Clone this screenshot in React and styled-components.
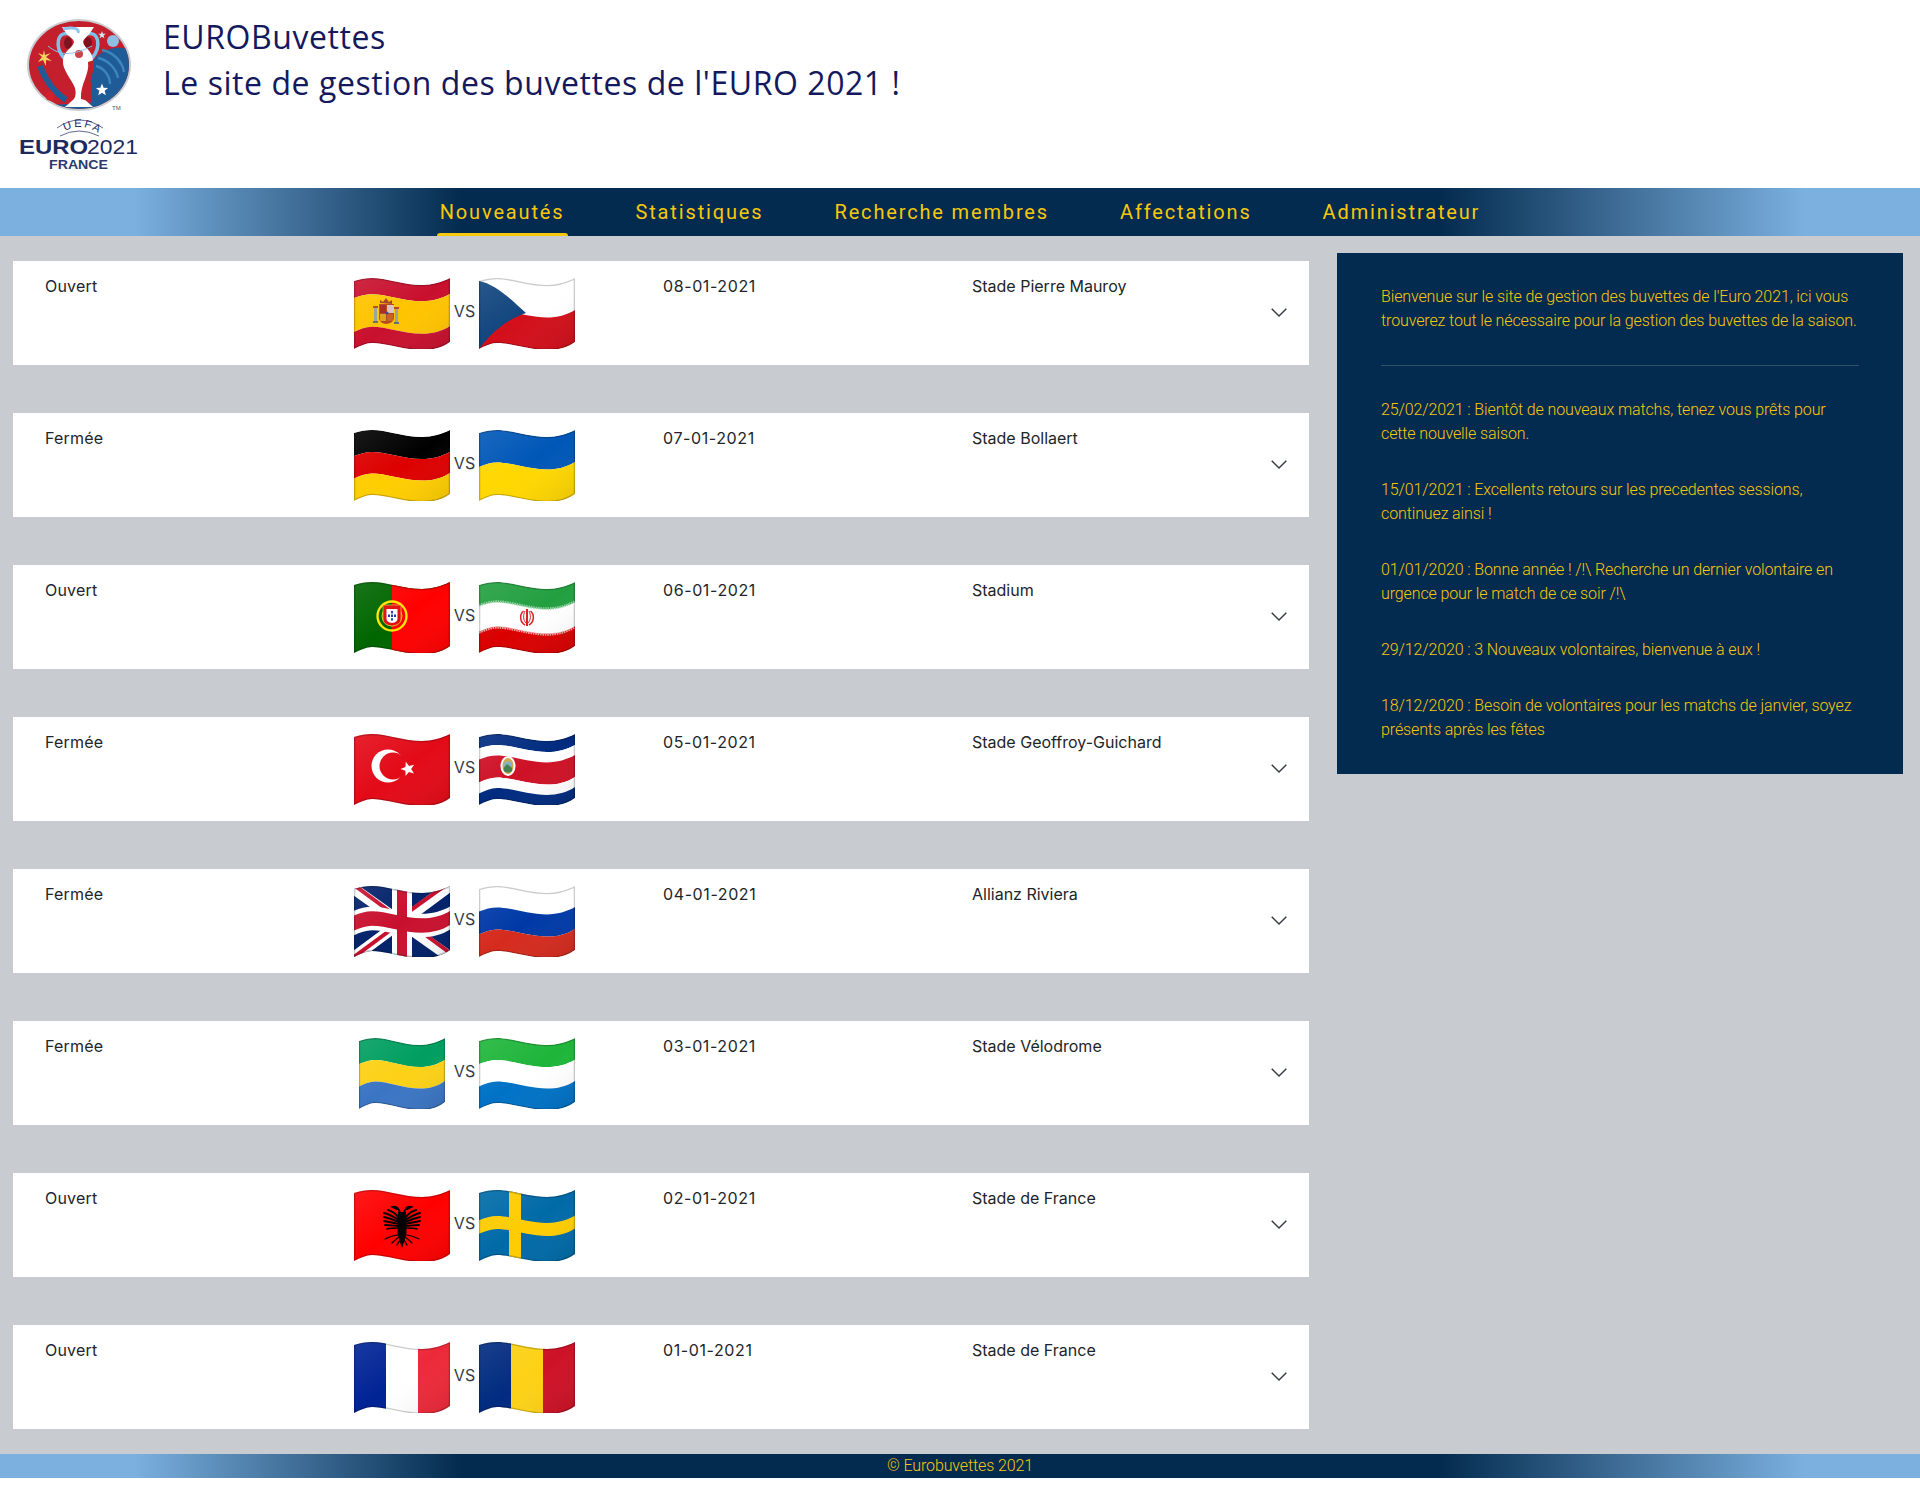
import React, { useId } from 'react';
import styled, { createGlobalStyle } from 'styled-components';

const navy = '#032b4f';
const sky = '#7bb0df';
const gold = '#f7c80c';
const bar = `linear-gradient(to right, ${sky} 7%, ${navy} 24%, ${navy} 75%, ${sky} 94%)`;

const GlobalStyle = createGlobalStyle`
  * { box-sizing: border-box; }
  body { margin: 0; background: #fff; font-family: 'Inter', sans-serif; color: #212529; }
  p { margin: 0; }
`;

const Header = styled.header`
  height: 188px;
  display: flex;
  background: #fff;
`;

const LogoArt = styled.svg`
  width: 163px;
  height: 188px;
  flex: none;
`;

const Titles = styled.div`
  padding-top: 14px;
`;

const Title = styled.h1`
  margin: 0;
  font-family: 'Open Sans', sans-serif;
  font-size: 32px;
  line-height: 46px;
  font-weight: 400;
  letter-spacing: 0.56px;
  color: #14195e;
`;

const Nav = styled.nav`
  height: 48px;
  display: flex;
  justify-content: center;
  align-items: center;
  gap: 71px;
  background: ${bar};
`;

const NavLink = styled.a`
  position: relative;
  font-family: 'Roboto', sans-serif;
  font-size: 20px;
  letter-spacing: 1.85px;
  color: ${gold};

  &::after {
    content: '';
    display: ${(p) => (p.$active ? 'block' : 'none')};
    position: absolute;
    left: -3px;
    right: -3px;
    top: 33px;
    height: 3px;
    border-radius: 3px 3px 0 0;
    background: ${gold};
  }
`;

const Main = styled.main`
  display: flex;
  align-items: flex-start;
  gap: 28px;
  padding: 17px 17px 25px 13px;
  background: #c8cbd0;
`;

const Matches = styled.div`
  width: 1296px;
  flex: none;
  display: flex;
  flex-direction: column;
  gap: 48px;
  padding-top: 8px;
`;

const MatchRow = styled.div`
  height: 104px;
  display: grid;
  grid-template-columns: 309px 309px 309px 1fr 16px;
  padding: 13px 22px 0 32px;
  background: #fff;
  font-size: 16px;
  line-height: 24px;
`;

const Cell = styled.div`
  letter-spacing: ${(p) => p.$spacing || 0}px;
`;

const Teams = styled.div`
  display: flex;
  align-items: center;
  height: 72px;
  margin-top: 3px;
`;

const Versus = styled.span`
  width: 29px;
  text-align: center;
  color: #343a40;
  font-size: 16px;
  position: relative;
  top: -2px;
`;

const FlagSlot = styled.div`
  width: 96px;
  height: 72px;
  display: flex;
  justify-content: center;
`;

const FlagArt = styled.svg`
  width: ${(p) => (p.$narrow ? 86 : 96)}px;
  height: 72px;
  display: block;
`;

const Chevron = styled.svg`
  width: 16px;
  height: 9px;
  align-self: center;
  margin-top: -15px;
`;

const Panel = styled.aside`
  flex: 1;
  padding: 32px 44px 0;
  background: ${navy};
  color: ${gold};
  font-family: 'Roboto', sans-serif;
  font-weight: 300;
  font-size: 16px;
  letter-spacing: -0.12px;
  line-height: 24px;
`;

const Divider = styled.hr`
  margin: 32px 0;
  border: 0;
  height: 1px;
  background: #2f5162;
`;

const News = styled.p`
  margin-bottom: 32px;
`;

const Footer = styled.footer`
  height: 24px;
  text-align: center;
  font-family: 'Roboto', sans-serif;
  font-weight: 300;
  font-size: 16px;
  letter-spacing: -0.12px;
  line-height: 24px;
  color: ${gold};
  background: ${bar};
`;

// wave outline of the emoji flags, t = 0 top edge, t = 1 bottom edge
const TOP = [4, 2, 1, 1, 1, 8, 8, 8, 5, 1];
const BOTTOM = [72, 69, 66, 66, 66, 73, 73, 73, 71, 65];
const at = (i, t) => (TOP[i] + (BOTTOM[i] - TOP[i]) * t).toFixed(2);

const forward = (t) =>
  `M0 ${at(0, t)} C6 ${at(1, t)} 12 ${at(2, t)} 18 ${at(3, t)} C32 ${at(4, t)} 50 ${at(5, t)} 68 ${at(6, t)} C78 ${at(7, t)} 88 ${at(8, t)} 96 ${at(9, t)}`;
const backward = (t) =>
  `L96 ${at(9, t)} C88 ${at(8, t)} 78 ${at(7, t)} 68 ${at(6, t)} C50 ${at(5, t)} 32 ${at(4, t)} 18 ${at(3, t)} C12 ${at(2, t)} 6 ${at(1, t)} 0 ${at(0, t)} Z`;
const band = (a, b) => `${forward(a)} ${backward(b)}`;

const Bands = ({ items }) =>
  items.map(([a, b, c]) => <path key={`${a}-${c}`} d={band(a, b)} fill={c} />);

const Columns = ({ colors }) =>
  colors.map((c, i) => (
    <rect key={c} x={(i * 96) / colors.length} y="0" width={96 / colors.length} height="74" fill={c} />
  ));

const Star = ({ cx, cy, r, fill = '#fff', rotate = 0 }) => {
  const pts = [];
  for (let i = 0; i < 10; i++) {
    const rad = i % 2 ? r * 0.42 : r;
    const a = -Math.PI / 2 + (i * Math.PI) / 5 + rotate;
    pts.push(`${(cx + rad * Math.cos(a)).toFixed(2)},${(cy + rad * Math.sin(a)).toFixed(2)}`);
  }
  return <polygon points={pts.join(' ')} fill={fill} />;
};

// one half of the Albanian eagle, feathers drawn apart so that they read at this size
const EagleHalf = () => (
  <g stroke="#000" strokeLinecap="round" fill="none">
    <path d="M-3 -8 C-6 -12 -10 -15 -14 -16" strokeWidth="2.2" />
    <path d="M-3 -6 C-8 -9 -13 -12 -18 -13" strokeWidth="2" />
    <path d="M-3 -4 C-8 -6 -13 -8 -18 -9" strokeWidth="2" />
    <path d="M-3 -2 C-8 -3 -13 -4 -18 -5" strokeWidth="2" />
    <path d="M-3 0 C-8 0 -13 -1 -17 -1" strokeWidth="1.8" />
    <path d="M-3 2 C-8 2 -12 2 -15 3" strokeWidth="1.6" />
    <path d="M-3 9 C-8 9 -13 11 -17 13" strokeWidth="1.2" />
    <path d="M-3 11 C-6 13 -9 16 -10 17" strokeWidth="1.2" />
    <path d="M-2 -13 C-3 -17 -5 -20 -9 -19 L-5 -17" strokeWidth="2" />
    <path d="M-2 14 L-5 19" strokeWidth="1.4" />
  </g>
);

const FLAGS = {
  es: () => (
    <>
      <Bands items={[[0, 0.25, '#c8102e'], [0.25, 0.75, '#ffc400'], [0.75, 1, '#c8102e']]} />
      <g>
        <rect x="20" y="30" width="3" height="15" fill="#9aa39a" />
        <rect x="41" y="31" width="3" height="15" fill="#9aa39a" />
        <rect x="19" y="29" width="5" height="2" fill="#b5481f" />
        <rect x="40" y="30" width="5" height="2" fill="#b5481f" />
        <rect x="19" y="44" width="5" height="2" fill="#6d6d6d" />
        <rect x="40" y="45" width="5" height="2" fill="#6d6d6d" />
        <path d="M26 26 L26 23 L29 25 L32 21 L35 25 L38 23 L38 27 Z" fill="#a8412a" />
        <path d="M25 27 H40 V41 Q40 46 32 47 Q25 46 25 41 Z" fill="#b5481f" />
        <rect x="33" y="28" width="7" height="8" fill="#d9c5c0" />
        <rect x="26" y="28" width="6" height="8" fill="#a82a20" />
        <rect x="26" y="37" width="6" height="7" fill="#e0a020" />
        <rect x="33" y="37" width="6" height="7" fill="#c8602a" />
        <circle cx="33" cy="36" r="1.6" fill="#3a4a8c" />
      </g>
    </>
  ),
  cz: () => (
    <>
      <Bands items={[[0, 0.5, '#fff'], [0.5, 1, '#d20f1a']]} />
      <path d="M0 4 C16 7 32 22 47 36 C28 42 12 56 0 72 Z" fill="#11457e" />
    </>
  ),
  de: () => <Bands items={[[0, 0.34, '#000'], [0.34, 0.67, '#dd0000'], [0.67, 1, '#ffce00']]} />,
  ua: () => <Bands items={[[0, 0.5, '#0057b7'], [0.5, 1, '#ffd700']]} />,
  pt: () => (
    <>
      <Columns colors={['#006600']} />
      <rect x="38" y="0" width="58" height="74" fill="#ff0000" />
      <circle cx="38" cy="35" r="14.5" fill="none" stroke="#ffe600" strokeWidth="2.4" />
      <circle cx="38" cy="35" r="10" fill="none" stroke="#d9c200" strokeWidth="1" />
      <path d="M29 24 H47 V38 Q47 44 38 45 Q29 44 29 38 Z" fill="#e01010" stroke="#f4e04a" strokeWidth="0.6" />
      <path d="M32.5 28 H43.5 V38 Q43.5 41 38 42 Q32.5 41 32.5 38 Z" fill="#fff" />
      <path d="M37 30 h2 v2.4 h-2 Z M34 33.6 h2 v2.4 h-2 Z M37 33.6 h2 v2.4 h-2 Z M40 33.6 h2 v2.4 h-2 Z M37 37.2 h2 v2.4 h-2 Z" fill="#1f3fa8" />
    </>
  ),
  ir: () => (
    <>
      <Bands items={[[0, 0.31, '#239f40'], [0.31, 0.69, '#fff'], [0.69, 1, '#da0000']]} />
      <path d={forward(0.3)} fill="none" stroke="#8fcf9f" strokeWidth="2.4" strokeDasharray="1.6 0.8" />
      <path d={forward(0.7)} fill="none" stroke="#eca0a0" strokeWidth="2.4" strokeDasharray="1.6 0.8" />
      <g fill="none" stroke="#da2020" strokeWidth="1.5">
        <path d="M48 28 V45" strokeWidth="2" />
        <path d="M44.5 30 C40 34 41 41 46 44" />
        <path d="M51.5 30 C56 34 55 41 50 44" />
        <path d="M46 30 C44 34 44 39 47 42" strokeWidth="1" />
        <path d="M50 30 C52 34 52 39 49 42" strokeWidth="1" />
      </g>
    </>
  ),
  tr: () => (
    <>
      <Columns colors={['#e30a17']} />
      <circle cx="34" cy="33" r="16.5" fill="#fff" />
      <circle cx="39" cy="33" r="13.5" fill="#e30a17" />
      <Star cx={54} cy={36} r={7.5} rotate={-0.3} />
    </>
  ),
  cr: () => (
    <>
      <Bands
        items={[
          [0, 0.17, '#002b7f'],
          [0.17, 0.33, '#fff'],
          [0.33, 0.67, '#ce1126'],
          [0.67, 0.83, '#fff'],
          [0.83, 1, '#002b7f'],
        ]}
      />
      <ellipse cx="29" cy="33" rx="7.5" ry="10" fill="#fff" />
      <ellipse cx="29" cy="33" rx="5.5" ry="8" fill="#c9a94e" />
      <ellipse cx="29" cy="32" rx="4" ry="3.5" fill="#7fb0c8" />
      <path d="M24.5 35 L28 31 L33 35 L33 38 Q29 41 25 38 Z" fill="#3f7f4a" />
    </>
  ),
  gb: () => (
    <>
      <Columns colors={['#012169']} />
      <path d="M0 4 L96 72 M96 1 L0 72" stroke="#fff" strokeWidth="11" />
      <path d="M0 0 L46 34 M50 34 L96 68 M96 -3 L50 30 M46 38 L0 72" stroke="#c8102e" strokeWidth="4" />
      <rect x="38" y="0" width="20" height="74" fill="#fff" />
      <Bands items={[[0.32, 0.68, '#fff']]} />
      <rect x="43" y="0" width="10" height="74" fill="#c8102e" />
      <Bands items={[[0.39, 0.61, '#c8102e']]} />
    </>
  ),
  ru: () => <Bands items={[[0, 0.33, '#fff'], [0.33, 0.67, '#0039a6'], [0.67, 1, '#d52b1e']]} />,
  ga: () => <Bands items={[[0, 0.34, '#009e60'], [0.34, 0.67, '#fcd116'], [0.67, 1, '#3a75c4']]} />,
  sl: () => <Bands items={[[0, 0.34, '#1eb53a'], [0.34, 0.67, '#fff'], [0.67, 1, '#0072c6']]} />,
  al: () => (
    <>
      <Columns colors={['#ff0000']} />
      <g transform="translate(48 37)">
        <EagleHalf />
        <g transform="scale(-1 1)">
          <EagleHalf />
        </g>
        <path d="M-4 -14 L4 -14 L4.5 8 L2 16 L0 22 L-2 16 L-4.5 8 Z" fill="#000" />
      </g>
    </>
  ),
  se: () => (
    <>
      <Columns colors={['#006aa7']} />
      <Bands items={[[0.4, 0.6, '#fecc00']]} />
      <rect x="30" y="0" width="12" height="74" fill="#fecc00" />
    </>
  ),
  fr: () => <Columns colors={['#002395', '#ffffff', '#ed2939']} />,
  ro: () => <Columns colors={['#002b7f', '#fcd116', '#ce1126']} />,
};

const Flag = ({ code, narrow }) => {
  const id = useId().replace(/[^a-zA-Z0-9]/g, '');
  const Art = FLAGS[code];
  const outline = band(0, 1);
  return (
    <FlagSlot>
      <FlagArt $narrow={narrow} viewBox="0 0 96 72" preserveAspectRatio="none">
        <defs>
          <clipPath id={`clip${id}`}>
            <path d={outline} />
          </clipPath>
          <linearGradient id={`shade${id}`} x1="0" y1="0" x2="1" y2="1">
            <stop offset="0" stopColor="#fff" stopOpacity="0.1" />
            <stop offset="0.5" stopColor="#fff" stopOpacity="0" />
            <stop offset="1" stopColor="#000" stopOpacity="0.1" />
          </linearGradient>
        </defs>
        <g clipPath={`url(#clip${id})`}>
          <Art />
          <path d={outline} fill={`url(#shade${id})`} />
          <path d={outline} fill="none" stroke="#000" strokeOpacity="0.2" strokeWidth="2.6" />
        </g>
      </FlagArt>
    </FlagSlot>
  );
};

const Logo = () => (
  <LogoArt viewBox="0 0 163 188">
    <defs>
      <clipPath id="logoOval">
        <ellipse cx="79" cy="65" rx="50" ry="44" />
      </clipPath>
      <path id="uefaArc" d="M59 135 Q79 119 101 135" />
    </defs>
    <ellipse cx="79" cy="65" rx="52" ry="46" fill="#c9cdd2" />
    <g clipPath="url(#logoOval)">
      <rect x="27" y="19" width="104" height="92" fill="#c31f2c" />
      <path d="M92 62 C100 50 116 44 131 50 V111 H27 V96 C36 100 52 106 66 104 H90 C96 92 86 76 92 62 Z" fill="#1f5c97" />
      <path d="M40 66 C46 82 54 92 66 100" stroke="#1f5c97" strokeWidth="6" fill="none" />
      <path d="M102 50 C112 52 122 60 124 72 M98 58 C108 60 116 68 118 78 M96 66 C104 68 110 76 110 84" stroke="#3c86bd" strokeWidth="2.4" fill="none" />
      <circle cx="113" cy="41" r="6" fill="#8fbde3" />
    </g>
    <circle cx="50" cy="96" r="4.5" fill="#d3212c" />
    <path d="M44 50 L45 55 L51 53 L46 57 L52 61 L46 60 L46 66 L43 60 L38 62 L42 57 L38 53 L43 55 Z" fill="#f4d35e" />
    <Star cx={102} cy={35} r={4} fill="#d8e2ee" />
    <Star cx={102} cy={90} r={6.5} />
    <path d="M70 34 C56 30 55 48 64 58 M86 34 C100 30 101 48 92 58" stroke="#7fc0ea" strokeWidth="3.5" fill="none" />
    <ellipse cx="68" cy="43" rx="4" ry="6" fill="#7c1420" />
    <ellipse cx="88" cy="43" rx="4" ry="6" fill="#7c1420" />
    <path d="M62 27 H94 L90 33 C88 36 84 38 83 42 C84 48 92 50 93 60 C95 70 86 78 83 88 C82 92 82 96 84 99 L93 107 H65 L74 99 C76 96 76 92 75 88 C71 78 62 70 63 60 C64 50 73 48 74 42 C73 38 68 36 66 33 Z" fill="#fff" />
    <path d="M88 62 C90 74 80 84 81 99 L85 100 C84 88 95 78 94 60 Z" fill="#c31f2c" />
    <circle cx="79" cy="54" r="4" fill="#d3404a" />
    <path d="M63 29 C72 27 80 28 78 33" stroke="#8cc6ee" strokeWidth="3" fill="none" />
    <path d="M48 46 C60 56 72 56 92 46" stroke="#8cc6ee" strokeWidth="1" fill="none" />
    <text x="112" y="110" fontFamily="Liberation Sans, sans-serif" fontSize="6" fill="#555">TM</text>
    <text fontFamily="Liberation Sans, sans-serif" fontSize="11" fill="#1c2a5e" letterSpacing="2.2">
      <textPath href="#uefaArc" startOffset="7">UEFA</textPath>
    </text>
    <path d="M57 128 Q79 112 103 128 M60 136 Q79 126 99 136" stroke="#1c2a5e" strokeWidth="0.7" fill="none" />
    <text x="19" y="154" fontFamily="Liberation Sans, sans-serif" fontWeight="700" fontSize="21" textLength="69" lengthAdjust="spacingAndGlyphs" fill="#1c2a5e">EURO</text>
    <text x="87" y="154" fontFamily="Liberation Sans, sans-serif" fontSize="21" textLength="51" lengthAdjust="spacingAndGlyphs" fill="#1c2a5e">2021</text>
    <text x="49" y="169" fontFamily="Liberation Sans, sans-serif" fontWeight="700" fontSize="12" textLength="59" lengthAdjust="spacingAndGlyphs" fill="#2c3a6e">FRANCE</text>
  </LogoArt>
);

const matches = [
  ['Ouvert', 'es', 'cz', '08-01-2021', 'Stade Pierre Mauroy'],
  ['Fermée', 'de', 'ua', '07-01-2021', 'Stade Bollaert'],
  ['Ouvert', 'pt', 'ir', '06-01-2021', 'Stadium'],
  ['Fermée', 'tr', 'cr', '05-01-2021', 'Stade Geoffroy-Guichard'],
  ['Fermée', 'gb', 'ru', '04-01-2021', 'Allianz Riviera'],
  ['Fermée', 'ga', 'sl', '03-01-2021', 'Stade Vélodrome'],
  ['Ouvert', 'al', 'se', '02-01-2021', 'Stade de France'],
  ['Ouvert', 'fr', 'ro', '01-01-2021', 'Stade de France'],
];

const news = [
  '25/02/2021 : Bientôt de nouveaux matchs, tenez vous prêts pour cette nouvelle saison.',
  '15/01/2021 : Excellents retours sur les precedentes sessions, continuez ainsi !',
  '01/01/2020 : Bonne année ! /!\\ Recherche un dernier volontaire en urgence pour le match de ce soir /!\\',
  '29/12/2020 : 3 Nouveaux volontaires, bienvenue à eux !',
  '18/12/2020 : Besoin de volontaires pour les matchs de janvier, soyez présents après les fêtes',
];

const links = ['Nouveautés', 'Statistiques', 'Recherche membres', 'Affectations', 'Administrateur'];

const App = () => (
  <>
    <GlobalStyle />
    <Header>
      <Logo />
      <Titles>
        <Title>EUROBuvettes</Title>
        <Title>Le site de gestion des buvettes de l'EURO 2021 !</Title>
      </Titles>
    </Header>
    <Nav>
      {links.map((l, i) => (
        <NavLink key={l} $active={i === 0}>{l}</NavLink>
      ))}
    </Nav>
    <Main>
      <Matches>
        {matches.map(([status, home, away, date, stadium]) => (
          <MatchRow key={date}>
            <Cell $spacing={0.2}>{status}</Cell>
            <Teams>
              <Flag code={home} narrow={home === 'ga'} />
              <Versus>VS</Versus>
              <Flag code={away} />
            </Teams>
            <Cell $spacing={0.6}>{date}</Cell>
            <Cell>{stadium}</Cell>
            <Chevron viewBox="0 0 16 9">
              <path d="M0.7 0.7 L8 8 L15.3 0.7" fill="none" stroke="#343a40" strokeWidth="1.4" />
            </Chevron>
          </MatchRow>
        ))}
      </Matches>
      <Panel>
        <p>
          Bienvenue sur le site de gestion des buvettes de l'Euro 2021, ici vous trouverez tout le
          nécessaire pour la gestion des buvettes de la saison.
        </p>
        <Divider />
        {news.map((n) => (
          <News key={n}>{n}</News>
        ))}
      </Panel>
    </Main>
    <Footer>© Eurobuvettes 2021</Footer>
  </>
);

export default App;
